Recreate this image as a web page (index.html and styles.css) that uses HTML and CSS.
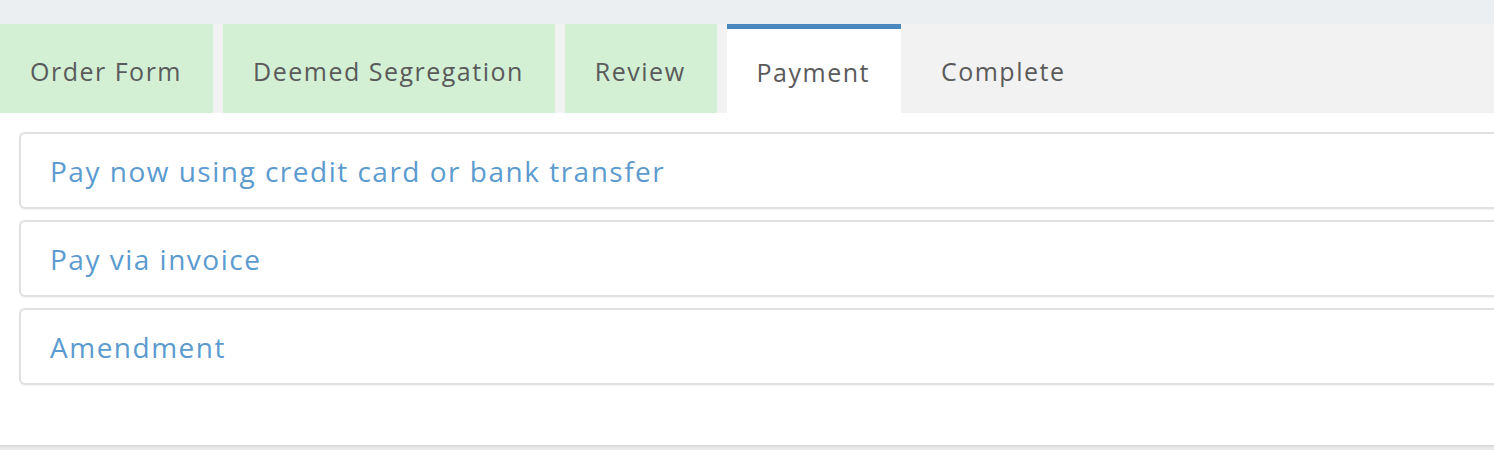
FILE: index.html
```html
<!DOCTYPE html>
<html lang="en">
<head>
    <meta charset="UTF-8">
    <meta name="viewport" content="width=device-width, initial-scale=1.0">
    <title>Payment</title>
    <link rel="stylesheet" href="styles.css">
</head>
<body>
    <div class="topbar"></div>

    <ul class="steps">
        <li class="step done">Order Form</li>
        <li class="step done">Deemed Segregation</li>
        <li class="step done">Review</li>
        <li class="step active">Payment</li>
        <li class="step">Complete</li>
    </ul>

    <div class="content">
        <div class="option"><a href="#">Pay now using credit card or bank transfer</a></div>
        <div class="option"><a href="#">Pay via invoice</a></div>
        <div class="option"><a href="#">Amendment</a></div>
    </div>

    <div class="footer"></div>
</body>
</html>
```

FILE: styles.css
```css
* {
    margin: 0;
    padding: 0;
    box-sizing: border-box;
}

body {
    font-family: "Open Sans", Lato, sans-serif;
    background-color: #fff;
    color: #555;
    overflow: hidden;
}

.topbar {
    height: 24px;
    background-color: #eceff2;
}

.steps {
    list-style: none;
    display: flex;
    gap: 10px;
    height: 89px;
    background-color: #f2f2f2;
}

.step {
    display: flex;
    align-items: center;
    padding: 4px 31px 0 30px;
    font-size: 25px;
    letter-spacing: 1.5px;
    color: #5a5a5a;
}

.step.done {
    background-color: #d3f0d5;
}

.step.active {
    background-color: #fff;
    border-top: 5px solid #4a87bf;
    padding-top: 0;
    height: 91px;
}

.content {
    padding: 19px 0 60px 19px;
    margin-right: -30px;
    display: flex;
    flex-direction: column;
    gap: 11px;
    border-bottom: 2px solid #dcdcdc;
}

.option {
    height: 77px;
    display: flex;
    align-items: center;
    padding-left: 29px;
    border: 2px solid #e0e0e0;
    border-radius: 6px;
    box-shadow: 0 1px 2px rgba(0, 0, 0, 0.05);
}

.option a {
    font-size: 28px;
    letter-spacing: 1.5px;
    color: #5b9bcf;
    text-decoration: none;
}

.footer {
    height: 20px;
    background-color: #e8eaec;
}
```
